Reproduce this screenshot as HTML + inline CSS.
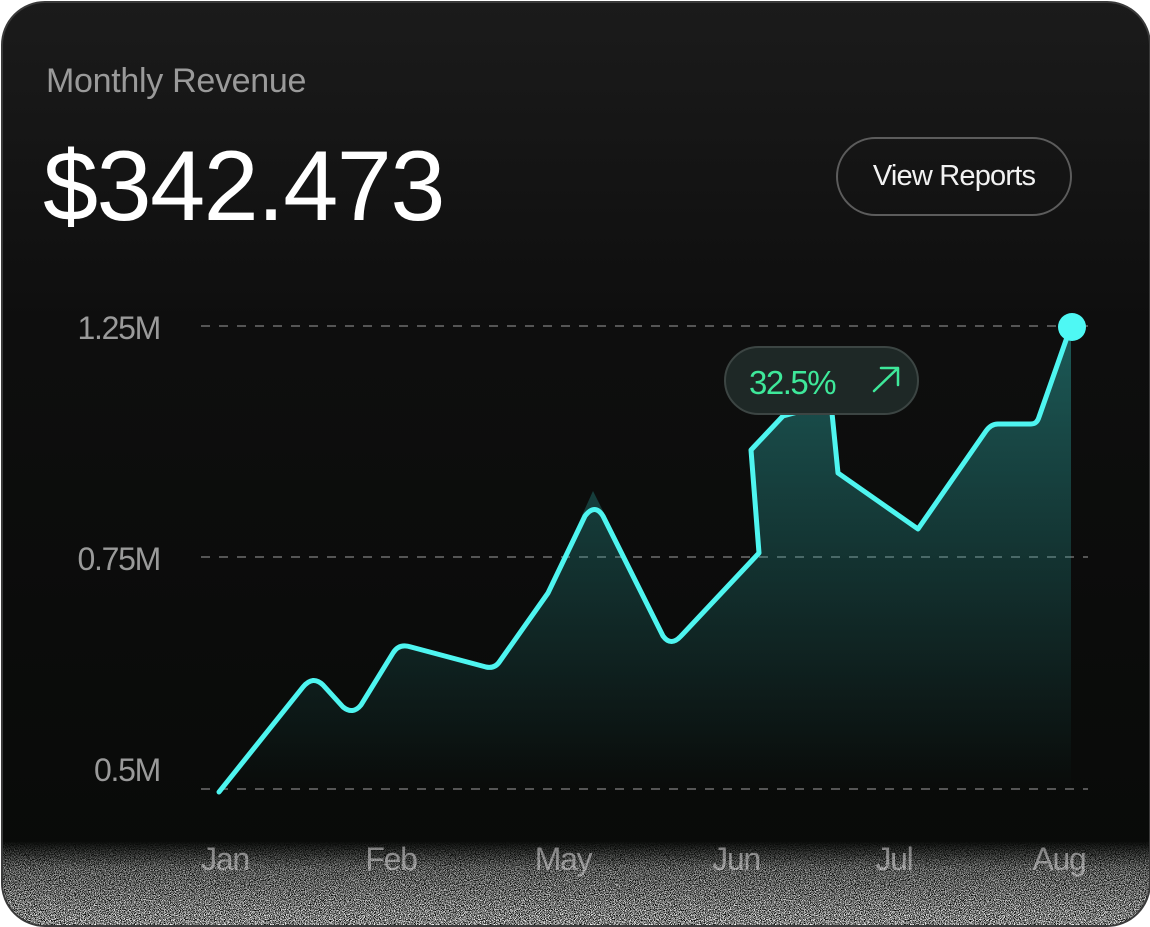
<!DOCTYPE html>
<html><head><meta charset="utf-8"><style>
html,body{margin:0;padding:0;background:#fff;width:1150px;height:926px;overflow:hidden}
.card{position:absolute;left:1px;top:1px;width:1146px;height:922px;border-radius:44px;border:2px solid #3a3a3a;background:linear-gradient(#1b1b1b 0%,#0e0e0e 35%,#080a08 100%);overflow:hidden;font-family:"Liberation Sans",sans-serif}
.t{position:absolute;white-space:nowrap}
</style></head><body>
<div class="card">
<div class="t" style="left:43px;top:59px;font-size:34px;color:#9a9a9a;letter-spacing:-0.3px">Monthly Revenue</div>
<div class="t" style="left:40px;top:126px;font-size:99px;color:#fff;letter-spacing:-1.5px">$342.473</div>
<div class="t" style="left:833px;top:134px;width:236px;height:79px;border:2px solid #5c5c5c;border-radius:40px;box-sizing:border-box;display:flex;align-items:center;justify-content:center;font-size:29px;color:#f2f2f2;letter-spacing:-0.8px">View Reports</div>
<svg width="1146" height="922" style="position:absolute;left:0;top:0">
<defs>
<linearGradient id="fg" x1="0" y1="0" x2="0" y2="1"><stop offset="0" stop-color="#2aa5a0" stop-opacity="0.5"/><stop offset="1" stop-color="#2aa5a0" stop-opacity="0"/></linearGradient>
<linearGradient id="ng" x1="0" y1="0" x2="0" y2="1"><stop offset="0" stop-color="#fff" stop-opacity="0"/><stop offset="0.3" stop-color="#fff" stop-opacity="0.6"/><stop offset="1" stop-color="#fff" stop-opacity="1"/></linearGradient>
<filter id="noise" x="0" y="0" width="100%" height="100%"><feTurbulence type="fractalNoise" baseFrequency="1.2" numOctaves="1" seed="3"/><feColorMatrix type="matrix" values="0 0 0 0 1 0 0 0 0 1 0 0 0 0 1 0 0 0 9 -4"/></filter>
<mask id="nm"><rect x="0" y="838" width="1146" height="90" fill="url(#ng)"/></mask>
</defs>
<g stroke="#555" stroke-width="2" stroke-dasharray="9 9">
<line x1="198" y1="323" x2="1085" y2="323"/><line x1="198" y1="554" x2="1085" y2="554"/><line x1="198" y1="786" x2="1085" y2="786"/>
</g>
<g font-size="32" fill="#9a9a9a" text-anchor="end" letter-spacing="-1.3">
<text x="157" y="336">1.25M</text><text x="157" y="567">0.75M</text><text x="157" y="778">0.5M</text>
</g>
<path d="M216,789 L305,678 L320,678 L345,706 L358,706 L395,643 L490,663 L545,588 L590,488 L665,638 L675,638 L756,550 L748,443 L780,410 L828,395 L835,470 L915,526 L988,421 L1033,421 L1068,323 L1068,789 Z" fill="url(#fg)"/>
<path d="M216,789 L300,684 Q310,672 320,682 L340,704 Q350,712 358,702 L390,650 Q396,640 408,644 L483,664 Q492,666 497,658 L545,590 L582,513 Q592,500 600,513 L660,633 Q668,644 678,633 L756,550 L748,447 L780,413 L828,400 L835,470 L915,526 L983,428 Q988,421 995,421 L1028,421 Q1034,421 1036,414 L1068,323" fill="none" stroke="#4ef5f0" stroke-width="5" stroke-linejoin="round" stroke-linecap="round"/>
<circle cx="1069" cy="324" r="14" fill="#4ef8f4"/>
<rect x="722" y="344" width="193" height="67" rx="33.5" fill="#1e2826" stroke="#3c4543" stroke-width="2"/>
<text x="746" y="391" font-size="33" fill="#3ee89a" letter-spacing="-1.5">32.5%</text>
<path d="M871,388 L895,365 M878,365 L895,365 L895,382" stroke="#3ee89a" stroke-width="2.5" fill="none" stroke-linecap="round" stroke-linejoin="round"/>
<g font-size="32" fill="#777" text-anchor="middle" letter-spacing="-1.3">
<text x="222" y="867">Jan</text><text x="388" y="867">Feb</text><text x="560" y="867">May</text><text x="733" y="867">Jun</text><text x="891" y="867">Jul</text><text x="1056" y="867">Aug</text>
</g>
<rect x="0" y="838" width="1146" height="90" filter="url(#noise)" mask="url(#nm)"/>
</svg>
</div>
</body></html>
